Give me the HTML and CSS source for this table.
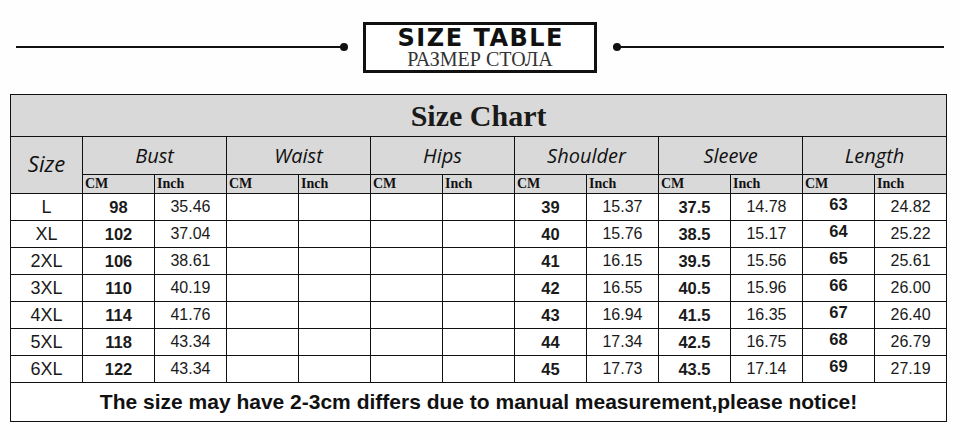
FILE: index.html
```html
<!DOCTYPE html>
<html lang="en">
<head>
<meta charset="utf-8">
<title>Size Table</title>
<link rel="stylesheet" href="styles.css">
</head>
<body>
<header class="banner">
  <div class="rule rule-left"></div>
  <div class="badge">
    <div class="badge-title">SIZE TABLE</div>
    <div class="badge-sub">РАЗМЕР СТОЛА</div>
  </div>
  <div class="rule rule-right"></div>
</header>
<table class="chart">
  <colgroup>
    <col><col><col><col><col><col><col><col><col><col><col><col><col>
  </colgroup>
  <tr class="row-title"><td colspan="13" class="title">Size Chart</td></tr>
  <tr class="row-head">
    <td rowspan="2" class="hand size-head">Size</td>
    <td colspan="2" class="hand">Bust</td>
    <td colspan="2" class="hand">Waist</td>
    <td colspan="2" class="hand">Hips</td>
    <td colspan="2" class="hand">Shoulder</td>
    <td colspan="2" class="hand">Sleeve</td>
    <td colspan="2" class="hand">Length</td>
  </tr>
  <tr class="row-sub">
    <td>CM</td><td>Inch</td><td>CM</td><td>Inch</td><td>CM</td><td>Inch</td>
    <td>CM</td><td>Inch</td><td>CM</td><td>Inch</td><td>CM</td><td>Inch</td>
  </tr>
  <tr class="row-data"><td class="sz">L</td><td class="cm">98</td><td>35.46</td><td></td><td></td><td></td><td></td><td class="cm">39</td><td>15.37</td><td class="cm">37.5</td><td>14.78</td><td class="cm up">63</td><td>24.82</td></tr>
  <tr class="row-data"><td class="sz">XL</td><td class="cm">102</td><td>37.04</td><td></td><td></td><td></td><td></td><td class="cm">40</td><td>15.76</td><td class="cm">38.5</td><td>15.17</td><td class="cm up">64</td><td>25.22</td></tr>
  <tr class="row-data"><td class="sz">2XL</td><td class="cm">106</td><td>38.61</td><td></td><td></td><td></td><td></td><td class="cm">41</td><td>16.15</td><td class="cm">39.5</td><td>15.56</td><td class="cm up">65</td><td>25.61</td></tr>
  <tr class="row-data"><td class="sz">3XL</td><td class="cm">110</td><td>40.19</td><td></td><td></td><td></td><td></td><td class="cm">42</td><td>16.55</td><td class="cm">40.5</td><td>15.96</td><td class="cm up">66</td><td>26.00</td></tr>
  <tr class="row-data"><td class="sz">4XL</td><td class="cm">114</td><td>41.76</td><td></td><td></td><td></td><td></td><td class="cm">43</td><td>16.94</td><td class="cm">41.5</td><td>16.35</td><td class="cm up">67</td><td>26.40</td></tr>
  <tr class="row-data"><td class="sz">5XL</td><td class="cm">118</td><td>43.34</td><td></td><td></td><td></td><td></td><td class="cm">44</td><td>17.34</td><td class="cm">42.5</td><td>16.75</td><td class="cm up">68</td><td>26.79</td></tr>
  <tr class="row-data"><td class="sz">6XL</td><td class="cm">122</td><td>43.34</td><td></td><td></td><td></td><td></td><td class="cm">45</td><td>17.73</td><td class="cm">43.5</td><td>17.14</td><td class="cm up">69</td><td>27.19</td></tr>
  <tr class="row-foot"><td colspan="13">The size may have 2-3cm differs due to manual measurement,please notice!</td></tr>
</table>
</body>
</html>
```

FILE: styles.css
```css
html, body {
  margin: 0;
  padding: 0;
  background: #fefefe;
}
body {
  width: 959px;
  height: 439px;
  overflow: hidden;
  font-family: "Liberation Sans", Arial, sans-serif;
  color: #111;
}

/* Banner */
.banner {
  display: flex;
  align-items: center;
  height: 94px;
  padding-left: 16px;
  box-sizing: border-box;
}
.rule {
  position: relative;
  height: 2px;
  background: #111;
}
.rule-left {
  width: 328px;
  margin-right: 19px;
}
.rule-left::after,
.rule-right::before {
  content: "";
  position: absolute;
  top: -3px;
  width: 8px;
  height: 8px;
  border-radius: 50%;
  background: #111;
}
.rule-left::after { right: -4px; }
.rule-right::before { left: 0; }
.rule-right {
  width: 331px;
  margin-left: 16px;
}
.badge {
  width: 234px;
  height: 51px;
  box-sizing: border-box;
  border: 3px solid #111;
  display: flex;
  flex-direction: column;
  align-items: center;
  justify-content: center;
  background: #fff;
}
.badge-title {
  font-family: "DejaVu Sans", "Lato", sans-serif;
  font-weight: 700;
  font-size: 24px;
  line-height: 24px;
  letter-spacing: 1.5px;
  margin-right: -1.5px;
  color: #111;
}
.badge-sub {
  font-family: "Liberation Serif", serif;
  font-size: 20px;
  line-height: 18px;
  color: #333;
}

/* Chart */
.chart {
  margin-left: 10px;
  border-collapse: collapse;
  table-layout: fixed;
  width: 937px;
}
.chart col { width: 72px; }
.chart td {
  border: 1px solid #111;
  padding: 0;
  text-align: center;
  vertical-align: middle;
  overflow: hidden;
  white-space: nowrap;
}
.row-title td,
.row-head td,
.row-sub td {
  background: #d9d9d9;
}
.row-title { height: 42px; }
.title {
  font-family: "Liberation Serif", serif;
  font-weight: 700;
  font-size: 30px;
  color: #1a1a1a;
}
.row-head { height: 38px; }
.hand {
  font-family: "Open Sans", "DejaVu Sans", sans-serif;
  font-style: italic;
  font-size: 20px;
  color: #111;
  padding-bottom: 3px;
}
.chart td.size-head {
  font-size: 22px;
  padding-bottom: 5px;
}
.row-sub { height: 19px; }
.row-sub td {
  font-family: "Liberation Serif", serif;
  font-weight: 700;
  font-size: 14px;
  text-align: left;
  padding-left: 2px;
  line-height: 16px;
}
.row-data { height: 27px; }
.row-data td {
  font-size: 16px;
  line-height: 20px;
  color: #1a1a1a;
  background: #fff;
}
.row-data td.sz { font-size: 18px; }
.row-data td.cm {
  font-weight: 700;
  font-size: 16.5px;
}
.row-data td.up {
  vertical-align: top;
  padding-top: 1px;
  line-height: 18px;
}
.row-foot { height: 39px; }
.row-foot td {
  background: #fff;
  font-weight: 700;
  font-size: 21px;
  color: #111;
}
```
